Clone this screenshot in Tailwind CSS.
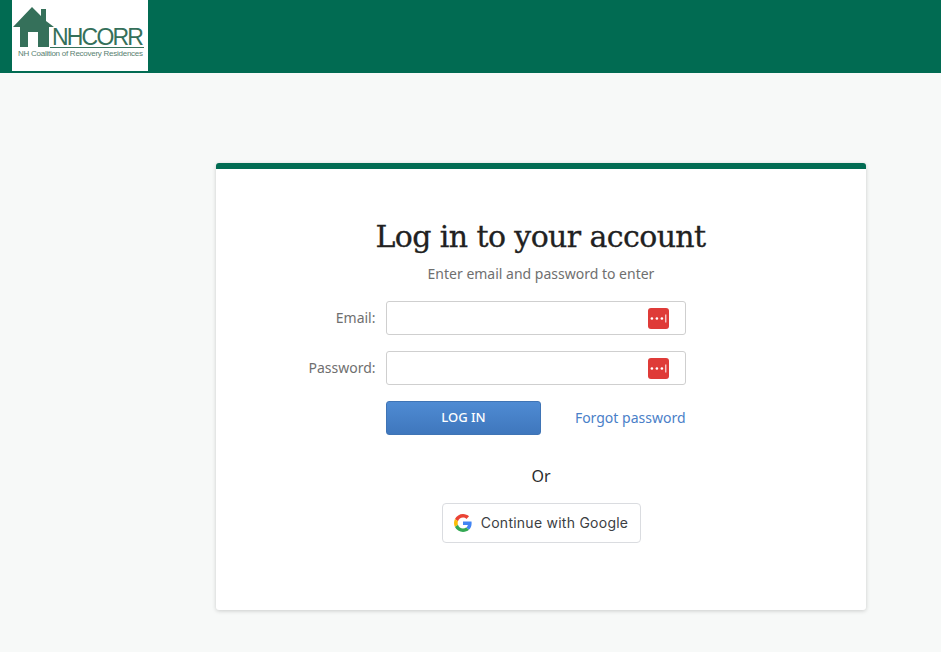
<!DOCTYPE html>
<html>
<head>
<meta charset="utf-8">
<script src="https://cdn.jsdelivr.net/npm/@tailwindcss/browser@4"></script>
</head>
<body class="bg-[#f7f9f8] font-['Noto_Sans',sans-serif] h-[652px] overflow-hidden">
<header class="h-[73px] bg-[#016b52] pl-3">
  <div class="relative w-[136px] h-[71px] bg-white overflow-hidden">
    <svg class="absolute left-0 top-[6px]" width="44" height="42" viewBox="0 0 44 42"><path d="M1 21 L20 1 L29 10 L29 3 L34 3 L34 15 L42 21 L37 21 L37 41 L26 41 L26 26 L16 26 L16 41 L8 41 L8 21 Z" fill="#35705a"/></svg>
    <span class="absolute left-[40px] top-[25px] text-[23px] leading-[24px] tracking-[-1.8px] text-[#35705a] font-['Liberation_Sans',sans-serif]">NHCORR</span>
    <div class="absolute left-[38px] top-[47px] w-[94px] h-px bg-[#35705a]"></div>
    <span class="absolute left-[6px] top-[49px] text-[8px] leading-[10px] tracking-[-0.26px] whitespace-nowrap text-[#5a7f71] font-['Liberation_Sans',sans-serif]">NH Coalition of Recovery Residences</span>
  </div>
</header>
<main class="pt-[90px] pl-[216px]">
  <section class="w-[650px] h-[447px] bg-white border-t-[6px] border-[#016b52] rounded-[3px] shadow-[0_1px_4px_rgba(0,0,0,0.18)] flex flex-col items-center">
    <h1 class="mt-[47px] mr-px text-[30px] leading-[42px] text-[#212121] font-['DejaVu_Serif',serif] tracking-[-0.6px] [-webkit-text-stroke:0.3px_#212121]">Log in to your account</h1>
    <p class="mt-[6px] text-sm leading-5 text-[#6f6f6f]">Enter email and password to enter</p>
    <form class="mt-[17px] w-[650px] flex flex-col">
      <div class="flex items-center h-[34px]">
        <label class="w-[160px] pr-[0.5px] text-right text-sm text-[#6f6f6f]">Email:</label>
        <div class="ml-[10px] w-[300px] h-[34px] border border-[#cfcfcf] rounded-[3px] bg-white flex items-center justify-end pr-4">
          <svg width="21" height="21" viewBox="0 0 21 21"><rect width="21" height="21" rx="3" fill="#df3b38"/><circle cx="3.9" cy="10.5" r="1.3" fill="#fff"/><circle cx="8.9" cy="10.5" r="1.3" fill="#fff"/><circle cx="13.9" cy="10.5" r="1.3" fill="#fff"/><rect x="17.3" y="6.5" width="1" height="8" fill="#fff"/></svg>
        </div>
      </div>
      <div class="flex items-center h-[34px] mt-4">
        <label class="w-[160px] pr-[0.5px] text-right text-sm text-[#6f6f6f]">Password:</label>
        <div class="ml-[10px] w-[300px] h-[34px] border border-[#cfcfcf] rounded-[3px] bg-white flex items-center justify-end pr-4">
          <svg width="21" height="21" viewBox="0 0 21 21"><rect width="21" height="21" rx="3" fill="#df3b38"/><circle cx="3.9" cy="10.5" r="1.3" fill="#fff"/><circle cx="8.9" cy="10.5" r="1.3" fill="#fff"/><circle cx="13.9" cy="10.5" r="1.3" fill="#fff"/><rect x="17.3" y="6.5" width="1" height="8" fill="#fff"/></svg>
        </div>
      </div>
      <div class="flex items-center mt-4 ml-[170px] w-[300px] justify-between">
        <button type="button" class="w-[155px] h-[34px] rounded-[3px] bg-gradient-to-b from-[#4f8bd3] to-[#3f77bd] border border-[#3f74b5] text-white text-[13px] font-medium">LOG IN</button>
        <a class="text-sm text-[#4a80c8] pr-[0.5px]">Forgot password</a>
      </div>
    </form>
    <p class="mt-[30px] text-base leading-[22px] text-[#2b2b2b]">Or</p>
    <button type="button" class="mt-4 w-[199px] h-10 border border-[#dadce0] rounded-[4px] bg-white flex items-center justify-center gap-[9px] text-sm text-[#3c4043] font-['Inter',sans-serif] tracking-[0.25px]">
      <svg width="18" height="18" viewBox="0 0 48 48"><path fill="#EA4335" d="M24 9.5c3.54 0 6.71 1.22 9.21 3.6l6.85-6.85C35.9 2.38 30.47 0 24 0 14.62 0 6.51 5.38 2.56 13.22l7.98 6.19C12.43 13.72 17.74 9.5 24 9.5z"/><path fill="#4285F4" d="M46.98 24.55c0-1.57-.15-3.09-.38-4.55H24v9.02h12.94c-.58 2.96-2.26 5.48-4.78 7.18l7.73 6c4.51-4.18 7.09-10.36 7.09-17.65z"/><path fill="#FBBC05" d="M10.53 28.59c-.48-1.45-.76-2.99-.76-4.59s.27-3.14.76-4.59l-7.98-6.19C.92 16.46 0 20.12 0 24c0 3.88.92 7.54 2.56 10.78l7.97-6.19z"/><path fill="#34A853" d="M24 48c6.48 0 11.93-2.13 15.89-5.81l-7.73-6c-2.15 1.45-4.92 2.3-8.16 2.3-6.26 0-11.57-4.22-13.47-9.91l-7.98 6.19C6.51 42.62 14.62 48 24 48z"/></svg>
      Continue with Google
    </button>
  </section>
</main>
</body>
</html>
